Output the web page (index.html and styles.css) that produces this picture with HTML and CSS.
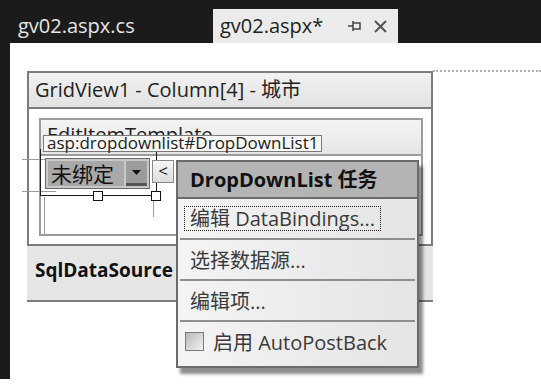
FILE: index.html
```html
<!DOCTYPE html>
<html lang="zh-CN">
<head>
<meta charset="UTF-8">
<title>gv02.aspx</title>
<link rel="stylesheet" href="styles.css">
</head>
<body>
<div class="tabbar">
    <div class="tab">gv02.aspx.cs</div>
    <div class="tab active">
        <span class="tab-name">gv02.aspx*</span>
        <svg class="pin" width="14" height="12" viewBox="0 0 14 12">
            <path d="M0 6H5M5 1V11M5 3H12V9H5" fill="none" stroke="#444" stroke-width="1.5"/>
        </svg>
        <svg class="close" width="13" height="13" viewBox="0 0 13 13">
            <path d="M1 1L12 12M12 1L1 12" stroke="#555" stroke-width="2"/>
        </svg>
    </div>
</div>
<div class="main">
    <div class="strip"></div>
    <div class="canvas">
        <div class="row">
            <div class="gridview">
                <div class="gv-title">GridView1 - Column[4] - 城市</div>
                <div class="gv-body">
                    <div class="template">
                        <div class="tpl-head">EditItemTemplate</div>
                        <div class="tpl-body"></div>
                    </div>
                </div>
            </div>
            <div class="dots"></div>
        </div>
        <div class="sqlds">SqlDataSource - SqlDataSource1</div>

        <!-- designer selection of the DropDownList -->
        <div class="guide guide-h1"></div>
        <div class="guide guide-h2"></div>
        <div class="guide guide-v1"></div>
        <div class="guide guide-v2"></div>
        <div class="selection"></div>
        <div class="handle handle-1"></div>
        <div class="handle handle-2"></div>
        <div class="tag-label">asp:dropdownlist#DropDownList1</div>
        <div class="dropdown">
            <span class="dd-text">未绑定</span>
            <span class="dd-btn"><svg width="9" height="5" viewBox="0 0 9 5"><path d="M0 0H9L4.5 5Z" fill="#111"/></svg></span>
        </div>
        <div class="smart-btn">&lt;</div>

        <div class="tasks">
            <div class="tasks-head">DropDownList 任务</div>
            <div class="tasks-list">
                <div class="task-item"><span class="focus">编辑 DataBindings...</span></div>
                <div class="task-sep"></div>
                <div class="task-item">选择数据源...</div>
                <div class="task-sep"></div>
                <div class="task-item">编辑项...</div>
                <div class="task-sep"></div>
                <div class="task-item"><span class="check"></span>启用 AutoPostBack</div>
            </div>
        </div>
    </div>
</div>
</body>
</html>
```

FILE: styles.css
```css
body {
    margin: 0;
    width: 541px;
    height: 389px;
    background: #fff;
    font-family: "Open Sans", "Noto Sans CJK SC", sans-serif;
    color: #222;
    overflow: hidden;
}
.tabbar {
    display: flex;
    align-items: flex-end;
    height: 43px;
    background: #1b1b1b;
}
.tab {
    box-sizing: border-box;
    width: 213px;
    height: 34px;
    line-height: 34px;
    padding-left: 18px;
    color: #e6e6e6;
    font-size: 20px;
}
.tab.active {
    display: flex;
    align-items: center;
    width: 185px;
    padding-left: 7px;
    background: #ebebeb;
    color: #222;
}
.tab-name {
    width: 128px;
}
.pin {
    margin-right: 12px;
}
.main {
    display: flex;
    height: 336px;
}
.strip {
    width: 10px;
    background: #1b1b1b;
}
.canvas {
    position: relative;
    flex: 1;
    padding: 28px 0 0 17px;
}
.row {
    display: flex;
}
.gridview {
    width: 402px;
    border: 2px solid #7c7c7c;
}
.dots {
    flex: 1;
    align-self: flex-start;
    margin-top: -1px;
    border-top: 2px dotted #b0b0b0;
}
.gv-title {
    height: 34px;
    line-height: 34px;
    padding-left: 6px;
    font-size: 20px;
    white-space: nowrap;
    background: linear-gradient(#f2f2f2, #e2e2e2);
    border-bottom: 2px solid #7c7c7c;
}
.gv-body {
    padding: 9px 8px 8px 10px;
}
.template {
    border: 2px solid #9c9c9c;
}
.tpl-head {
    height: 34px;
    line-height: 30px;
    padding-left: 6px;
    font-size: 20px;
    background: linear-gradient(#f4f4f4, #e6e6e6);
    border-bottom: 2px solid #9c9c9c;
}
.tpl-body {
    height: 78px;
    background: #fff;
}
.sqlds {
    width: 406px;
    height: 56px;
    line-height: 48px;
    padding-left: 8px;
    box-sizing: border-box;
    font-size: 19px;
    font-weight: bold;
    color: #111;
    background: #e6e6e6;
    border-bottom: 2px solid #7c7c7c;
    white-space: nowrap;
    overflow: hidden;
}
.guide {
    position: absolute;
    background: #9a9a9a;
}
.guide-h1 { left: 12px; top: 116px; width: 34px; height: 1px; }
.guide-h2 { left: 12px; top: 148px; width: 34px; height: 1px; }
.guide-v1 { left: 34px; top: 154px; width: 1px; height: 38px; }
.guide-v2 { left: 143px; top: 154px; width: 1px; height: 20px; }
.selection {
    position: absolute;
    left: 30px;
    top: 106px;
    width: 115px;
    height: 46px;
    border: 1px solid #1a1a1a;
    border-top: none;
}
.handle {
    position: absolute;
    top: 148px;
    width: 8px;
    height: 8px;
    background: #fff;
    border: 1px solid #111;
}
.handle-1 { left: 83px; }
.handle-2 { left: 141px; }
.tag-label {
    position: absolute;
    left: 33px;
    top: 92px;
    width: 279px;
    height: 17px;
    line-height: 14px;
    padding-left: 3px;
    box-sizing: border-box;
    background: #f7f7f7;
    border: 1px solid #7a7a7a;
    font-size: 17px;
    color: #222;
    white-space: nowrap;
}
.dropdown {
    position: absolute;
    left: 35px;
    top: 115px;
    display: flex;
    width: 105px;
    height: 31px;
    box-sizing: border-box;
    padding: 2px;
    border: 1px solid #6a6a6a;
    background: #c9c9c9;
}
.dd-text {
    flex: 1;
    padding-left: 3px;
    line-height: 26px;
    font-size: 21px;
    background: #a9a9a9;
    color: #111;
    white-space: nowrap;
}
.dd-btn {
    display: flex;
    align-items: center;
    justify-content: center;
    width: 21px;
    margin-left: 2px;
    background: #9c9c9c;
    border-bottom: 3px solid #555;
}
.smart-btn {
    position: absolute;
    left: 142px;
    top: 117px;
    width: 22px;
    height: 23px;
    box-sizing: border-box;
    line-height: 20px;
    text-align: center;
    font-size: 17px;
    background: linear-gradient(#f6f6f6, #dcdcdc);
    border: 1px solid #8a8a8a;
}
.tasks {
    position: absolute;
    left: 166px;
    top: 117px;
    width: 243px;
    height: 208px;
    box-sizing: border-box;
    border: 2px solid #6b6b6b;
    box-shadow: 4px 6px 3px rgba(0, 0, 0, 0.45);
    background: linear-gradient(90deg, #f4f4f4, #e4e4e4);
}
.tasks-head {
    height: 35px;
    line-height: 35px;
    padding-left: 12px;
    font-size: 20px;
    font-weight: bold;
    color: #111;
    white-space: nowrap;
    background: #b4b4b4;
    border-bottom: 2px solid #6b6b6b;
}
.tasks-list {
    padding: 0 2px;
}
.task-item {
    display: flex;
    align-items: center;
    height: 39px;
    padding-left: 10px;
    font-size: 20px;
    color: #3a3a3a;
    white-space: nowrap;
}
.focus {
    margin-left: -6px;
    padding: 0 5px;
    line-height: 23px;
    border: 1px dotted #222;
}
.task-sep {
    height: 2px;
    background: #8e8e8e;
}
.check {
    width: 17px;
    height: 17px;
    margin: 0 9px 0 -5px;
    border: 1px solid #7a7a7a;
    background: linear-gradient(135deg, #b8b8b8, #f2f2f2);
}
```
